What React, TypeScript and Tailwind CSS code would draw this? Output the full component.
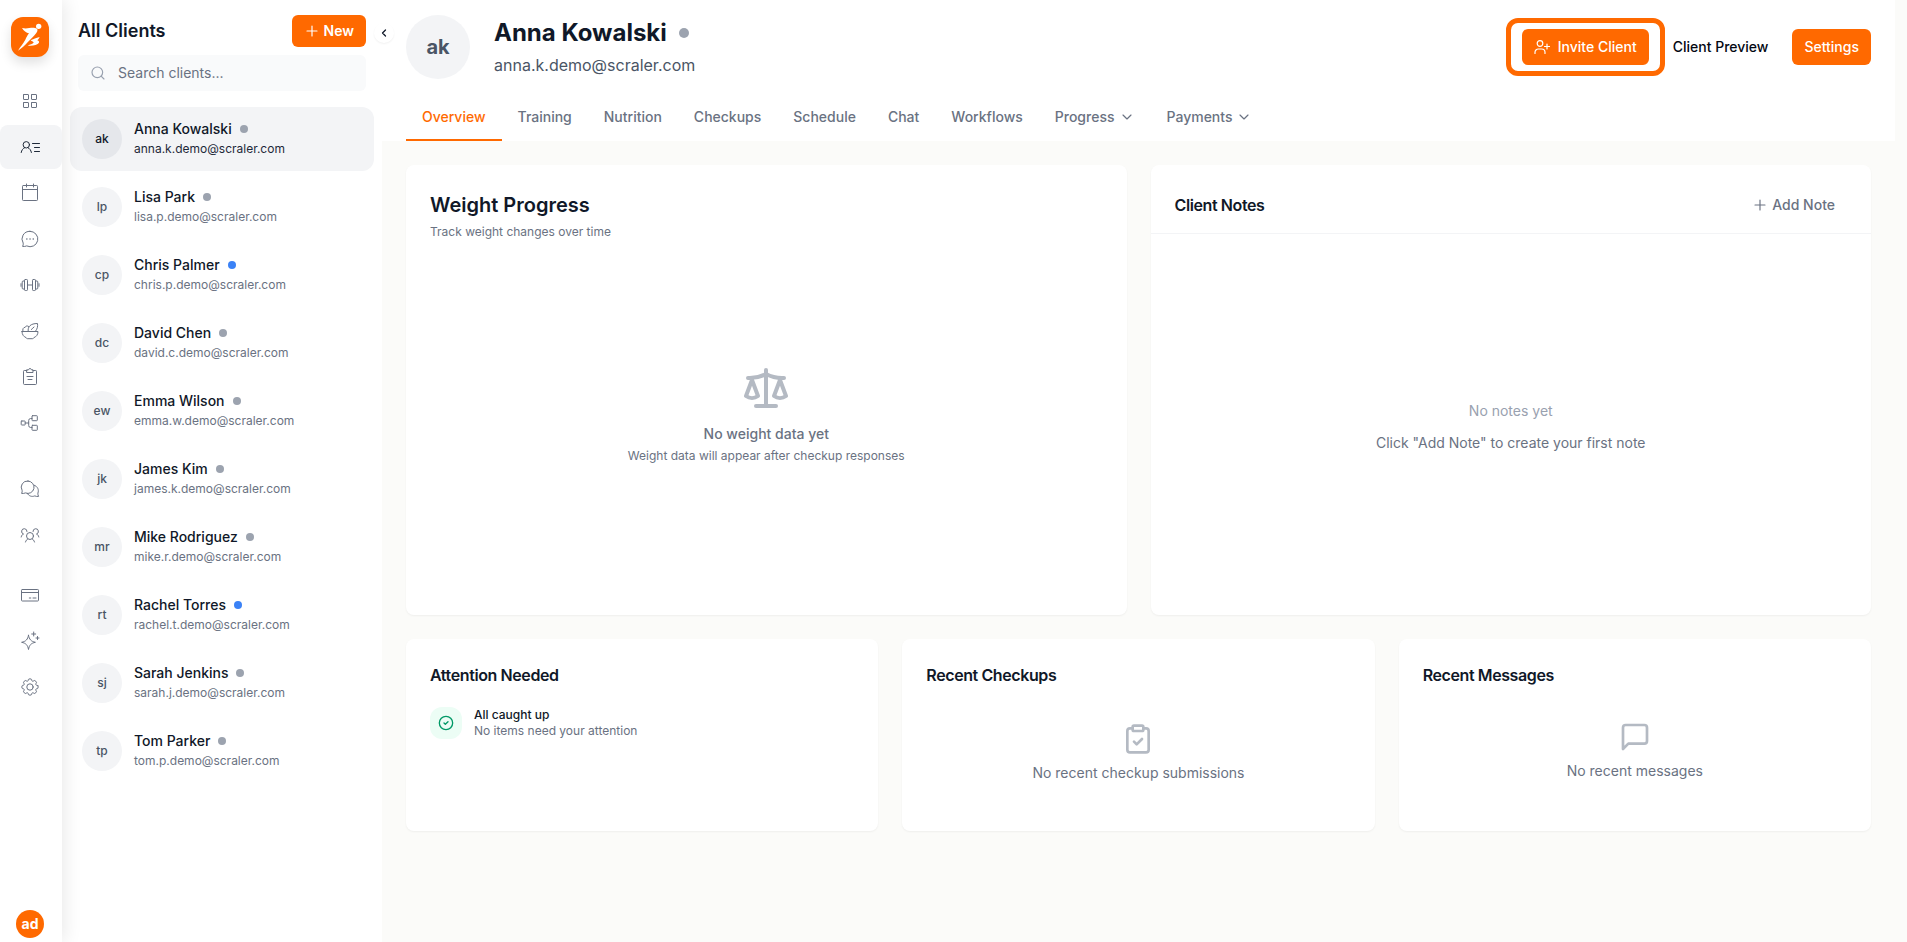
import type { ReactNode } from 'react';
import { ChevronDown, ChevronLeft, CircleCheck, ClipboardCheck, Scale, Search } from 'lucide-react';

interface Client {
  name: string;
  initials: string;
  email: string;
  active?: boolean;
}

const clients: Client[] = [
  { name: 'Anna Kowalski', initials: 'ak', email: 'anna.k.demo@scraler.com' },
  { name: 'Lisa Park', initials: 'lp', email: 'lisa.p.demo@scraler.com' },
  { name: 'Chris Palmer', initials: 'cp', email: 'chris.p.demo@scraler.com', active: true },
  { name: 'David Chen', initials: 'dc', email: 'david.c.demo@scraler.com' },
  { name: 'Emma Wilson', initials: 'ew', email: 'emma.w.demo@scraler.com' },
  { name: 'James Kim', initials: 'jk', email: 'james.k.demo@scraler.com' },
  { name: 'Mike Rodriguez', initials: 'mr', email: 'mike.r.demo@scraler.com' },
  { name: 'Rachel Torres', initials: 'rt', email: 'rachel.t.demo@scraler.com', active: true },
  { name: 'Sarah Jenkins', initials: 'sj', email: 'sarah.j.demo@scraler.com' },
  { name: 'Tom Parker', initials: 'tp', email: 'tom.p.demo@scraler.com' },
];

const tabs = [
  { label: 'Overview' },
  { label: 'Training' },
  { label: 'Nutrition' },
  { label: 'Checkups' },
  { label: 'Schedule' },
  { label: 'Chat' },
  { label: 'Workflows' },
  { label: 'Progress', menu: true },
  { label: 'Payments', menu: true },
];

// Rounded eight-lobed outline for the settings gear
function gearPath() {
  const at = (r: number, deg: number) => {
    const a = (deg * Math.PI) / 180;
    return `${(10 + r * Math.cos(a)).toFixed(2)} ${(10 + r * Math.sin(a)).toFixed(2)}`;
  };
  let d = `M${at(8, -9)}`;
  for (let i = 0; i < 8; i++) {
    const base = i * 45;
    d += `Q${at(8.4, base)} ${at(8, base + 9)}Q${at(7.6, base + 14)} ${at(6.7, base + 16)}Q${at(5.8, base + 22.5)} ${at(6.7, base + 29)}Q${at(7.6, base + 31)} ${at(8, base + 36)}`;
  }
  return `${d}Z`;
}

const icons: Record<string, ReactNode> = {
  dashboard: (
    <>
      <rect x="3.5" y="3.5" width="5" height="5" rx=".4" />
      <rect x="11.5" y="3.5" width="5" height="5" rx=".4" />
      <rect x="3.5" y="11.5" width="5" height="5" rx=".4" />
      <rect x="11.5" y="11.5" width="5" height="5" rx=".4" />
    </>
  ),
  clients: (
    <>
      <circle cx="6.3" cy="7.8" r="3.2" />
      <path d="M1.2 15.5c.4-2.3 1.7-4 3.4-4.8M8 10.700c1.700.8 3 2.500 3.400 4.800M12.500 6.500h7M14.500 10.500h5M14.500 14.500h5" />
    </>
  ),
  calendar: (
    <>
      <rect x="2.500" y="2.500" width="15" height="15" rx=".8" />
      <path d="M2.500 6.500h15M6.500 1v3M13.500 1v3" />
    </>
  ),
  messages: (
    <>
      <path d="M10 2.300a7.700 7.700 0 1 1-3.300 14.600c-1.300.6-2.700.7-4.100.5.600-1 .8-2.100.6-3.300A7.700 7.700 0 0 1 10 2.300Z" />
      <path d="M6.800 10h.1M10 10h.1M13.200 10h.1" strokeWidth="1.500" />
    </>
  ),
  training: (
    <>
      <rect x="4.500" y="4.500" width="3" height="11" rx=".8" />
      <rect x="12.500" y="4.500" width="3" height="11" rx=".8" />
      <path d="M7.500 10h5M4.500 6H3c-.5 0-.8.400-.8 1v6c0 .6.300 1 .8 1h1.500M15.500 6H17c.5 0 .8.400.8 1v6c0 .6-.3 1-.8 1h-1.500M1 8.700v2.600M19 8.700v2.600" />
    </>
  ),
  nutrition: (
    <>
      <path d="M2 10.500h16c0 3.200-1.700 5.200-4.200 6.200-.2.600-.7 1-1.300 1h-5c-.6 0-1.100-.4-1.300-1C3.700 15.700 2 13.700 2 10.500Z" />
      <path d="M3 10.500c-.8-2.300.3-4.200 2.200-4.200.4-1.300 2-1.900 3.400-.9M8.200 10.500C7.500 5.500 10.500 2.500 17.500 2.500c.4 3-.1 5.500-2.200 8M11.500 8.500c.7-1 1.500-1.800 2.500-2.500" />
    </>
  ),
  checkups: (
    <>
      <path d="M7 3.500H4.300a.8.800 0 0 0-.8.800v12.400c0 .4.400.8.800.8h11.400c.4 0 .8-.4.800-.8V4.300a.8.800 0 0 0-.8-.8H13" />
      <path d="M7 2.800h1.500c.3-.9.800-1.300 1.500-1.300s1.200.4 1.500 1.300H13v2.700H7ZM7 9.500h6M8 12.500h4" />
    </>
  ),
  workflows: (
    <>
      <rect x="1.200" y="8" width="4" height="4" rx=".6" />
      <rect x="12" y="2.700" width="5.300" height="5" rx=".6" />
      <rect x="12" y="12.300" width="5.300" height="5" rx=".6" />
      <path d="M5.200 10h3.500M12 5.500h-1.300a2 2 0 0 0-2 2v5a2 2 0 0 0 2 2H12" />
    </>
  ),
  forum: (
    <>
      <path d="M8 2a6.200 6.200 0 1 1-2.600 11.900c-1.200.6-2.400.7-3.800.5.600-1 .7-2 .5-3.100A6.200 6.200 0 0 1 8 2Z" />
      <path d="M14.200 6.200c3.400 1.200 5 4.600 3.700 7.900-.1 1.200.1 2.200.7 3.300-1.400.2-2.600.1-3.800-.5-3 1.200-5.900.2-7.500-2.500" />
    </>
  ),
  community: (
    <>
      <circle cx="10" cy="11" r="3.500" />
      <path d="M5.500 17c.4-1.500 1.200-2.500 2.300-3M14.500 17c-.4-1.500-1.200-2.500-2.300-3M7 6.500A2.700 2.700 0 1 0 3.500 9C2.300 9.500 1.500 10.500 1.200 12M13 6.500A2.700 2.700 0 1 1 16.500 9c1.200.5 2 1.500 2.300 3" />
    </>
  ),
  payments: (
    <>
      <rect x="1.500" y="4.500" width="17" height="11.500" rx=".8" />
      <path d="M1.500 7.500h17M9.300 13h1.500M13 13h3" />
    </>
  ),
  ai: (
    <>
      <path d="M8.500 4.300c.8 4.200 2.500 6.100 6.900 7-4.400.9-6.100 2.800-6.900 7.200-.8-4.400-2.500-6.300-6.900-7.200 4.400-.9 6.100-2.800 6.900-7Z" />
      <path d="M13.700 1v4M11.700 3h4M17.500 5.500v3M16 7h3" />
    </>
  ),
  settings: (
    <>
      <path d={gearPath()} />
      <circle cx="10" cy="10" r="3.200" />
    </>
  ),
};

const navGroups = [
  ['dashboard', 'clients', 'calendar', 'messages', 'training', 'nutrition', 'checkups', 'workflows'],
  ['forum', 'community'],
  ['payments', 'ai', 'settings'],
];

const groupSpacing = ['mt-[22px]', 'mt-[22px]', 'mt-4'];

export default function App() {
  return (
    <div className="flex min-h-screen bg-[#fbfbf9] font-['Inter',sans-serif] text-sm text-gray-900">
      <IconRail />
      <ClientList />
      <main className="min-w-0 flex-1 pr-3">
        <ClientHeader />
        <Overview />
      </main>
    </div>
  );
}

function IconRail() {
  return (
    <aside className="z-10 flex w-[62px] shrink-0 flex-col bg-white pt-[17px] pb-1 shadow-[4px_0_16px_rgba(0,0,0,0.08)]">
      <a
        href="#home"
        aria-label="Home"
        className="ml-[11px] flex h-10 w-[38px] items-center justify-center rounded-xl bg-orange-500 shadow-[0_6px_12px_rgba(0,0,0,0.12)]"
      >
        <svg viewBox="0 0 114 120" className="h-10 w-[38px]" fill="white" aria-hidden="true">
          <circle cx="83" cy="28" r="8" />
          <path d="M33 33C48 37 58 31 72 33C80 34 82 40 76 48C68 58 59 66 50 76C42 85 32 94 21 101C28 89 37 79 43 68C46 62 48 57 54 49C46 47 38 42 33 33Z" />
          <path d="M62 68C68 68 74 62 86 60C83 66 81 68 79 70C86 73 86 78 80 81C72 86 62 86 50 86C57 82 65 80 68 77C67 74 64 72 59 71Z" />
        </svg>
      </a>
      <nav>
        {navGroups.map((group, i) => (
          <div key={group[0]} className={`flex flex-col gap-0.5 ${groupSpacing[i]}`}>
            {group.map((id) => (
              <a
                key={id}
                href={`#${id}`}
                aria-label={id}
                className={`flex h-11 items-center justify-center rounded-lg pr-0.5 ${
                  id === 'clients' ? 'bg-gray-100 text-gray-800' : 'text-gray-500'
                }`}
              >
                <svg
                  viewBox="0 0 20 20"
                  className="size-5"
                  fill="none"
                  stroke="currentColor"
                  strokeWidth="1"
                  strokeLinecap="round"
                  strokeLinejoin="round"
                  aria-hidden="true"
                >
                  {icons[id]}
                </svg>
              </a>
            ))}
          </div>
        ))}
      </nav>
      <button
        type="button"
        className="mt-auto ml-4 size-7 rounded-full bg-orange-500 text-sm font-bold text-white"
      >
        ad
      </button>
    </aside>
  );
}

function ClientList() {
  return (
    <section className="relative w-80 shrink-0 bg-white pt-[15px]">
      <div className="flex items-center justify-between px-4">
        <h2 className="text-lg font-semibold">All Clients</h2>
        <button
          type="button"
          className="flex h-8 items-center gap-1 rounded-md bg-orange-500 px-3 text-sm font-semibold text-white"
        >
          <PlusIcon />
          New
        </button>
      </div>
      <label className="mx-4 mt-2 flex h-9 items-center gap-3 rounded-md bg-gray-50 px-3">
        <Search size={16} strokeWidth={1.75} className="text-gray-400" />
        <input
          type="search"
          aria-label="Search clients"
          placeholder="Search clients..."
          className="min-w-0 flex-1 bg-transparent text-sm outline-none placeholder:text-gray-500"
        />
      </label>
      <ul className="mt-4 flex flex-col gap-1 px-2">
        {clients.map((client, i) => (
          <li key={client.email}>
            <a
              href={`#${client.initials}`}
              className={`flex h-16 items-center gap-3 rounded-xl px-3 ${i === 0 ? 'bg-gray-100' : ''}`}
            >
              <span
                className={`flex size-10 shrink-0 items-center justify-center rounded-full text-xs font-medium ${
                  i === 0 ? 'bg-gray-200 text-gray-900' : 'bg-gray-100 text-gray-600'
                }`}
              >
                {client.initials}
              </span>
              <span className="min-w-0">
                <span className="flex items-center gap-2 text-sm font-medium">
                  {client.name}
                  <span className={`size-2 rounded-full ${client.active ? 'bg-[#3b82f6]' : 'bg-[#9ca3af]'}`} />
                </span>
                <span className={`block text-xs leading-5 ${i === 0 ? 'text-gray-800' : 'text-gray-500'}`}>
                  {client.email}
                </span>
              </span>
            </a>
          </li>
        ))}
      </ul>
      <button
        type="button"
        aria-label="Collapse client list"
        className="absolute top-[23px] -right-3 flex size-5 items-center justify-center rounded-full bg-white text-gray-900 shadow-[0_1px_2px_rgba(0,0,0,0.06)]"
      >
        <ChevronLeft size={12} strokeWidth={2.5} />
      </button>
    </section>
  );
}

function ClientHeader() {
  return (
    <header className="bg-white px-6 pt-[15px]">
      <div className="flex items-center justify-between">
        <div className="flex items-center gap-6">
          <div className="flex size-16 items-center justify-center rounded-full bg-gray-100 text-xl font-bold text-gray-600">
            ak
          </div>
          <div>
            <h1 className="flex items-center gap-3 text-2xl font-bold">
              Anna Kowalski
              <span className="size-2.5 rounded-full bg-[#9ca3af]" />
            </h1>
            <p className="mt-1 text-base text-gray-600">anna.k.demo@scraler.com</p>
          </div>
        </div>
        <div className="flex items-center gap-3">
          <div className="relative">
            <button
              type="button"
              className="flex h-9 items-center gap-2 rounded-md bg-orange-500 px-3 text-sm font-medium text-white"
            >
              <svg
                viewBox="0 0 16 16"
                className="size-4"
                fill="none"
                stroke="currentColor"
                strokeWidth="1.2"
                strokeLinecap="round"
                aria-hidden="true"
              >
                <circle cx="6" cy="4.500" r="2.800" />
                <path d="M1 14.500v-1.200a3.300 3.300 0 0 1 3.300-3.300h3.400a3.300 3.300 0 0 1 3.300 3.300v1.200M13 5v5M10.500 7.500h5" />
              </svg>
              Invite Client
            </button>
            <span className="pointer-events-none absolute -inset-x-4 -inset-y-[11px] rounded-xl border-5 border-orange-500" />
          </div>
          <button type="button" className="h-9 px-3 text-sm font-medium text-gray-950">
            Client Preview
          </button>
          <button type="button" className="h-9 rounded-md bg-orange-500 px-3 text-sm font-medium text-white">
            Settings
          </button>
        </div>
      </div>
      <nav className="mt-[14px] flex">
        {tabs.map((tab, i) => (
          <a
            key={tab.label}
            href={`#${tab.label.toLowerCase()}`}
            className={`flex h-12 items-center gap-1 border-b-2 px-4 pt-0.5 text-sm font-medium ${
              i === 0 ? 'border-orange-500 text-orange-500' : 'border-transparent text-gray-500'
            }`}
          >
            {tab.label}
            {tab.menu ? <ChevronDown size={16} strokeWidth={1.75} /> : null}
          </a>
        ))}
      </nav>
    </header>
  );
}

function Overview() {
  return (
    <div className="p-6">
      <div className="grid grid-cols-2 gap-6">
        <Card className="flex min-h-[450px] flex-col p-6">
          <h2 className="text-xl leading-8 font-semibold">Weight Progress</h2>
          <p className="mt-[3px] text-xs text-gray-500">Track weight changes over time</p>
          <div className="flex flex-1 flex-col items-center pt-[124px]">
            <Scale size={48} className="text-[#9ca3af] opacity-75" />
            <p className="mt-3 text-sm font-medium text-gray-500">No weight data yet</p>
            <p className="mt-1 text-xs text-gray-500">Weight data will appear after checkup responses</p>
          </div>
        </Card>
        <Card className="flex flex-col">
          <div className="flex items-center justify-between border-b border-gray-100 px-6 pt-6 pb-3">
            <h2 className="text-base font-semibold tracking-tight">Client Notes</h2>
            <button type="button" className="flex h-8 items-center gap-1 px-3 text-sm font-medium text-gray-500">
              <PlusIcon />
              Add Note
            </button>
          </div>
          <div className="flex flex-1 flex-col items-center justify-center gap-3 pt-1 text-sm">
            <p className="text-gray-400">No notes yet</p>
            <p className="text-gray-500">Click "Add Note" to create your first note</p>
          </div>
        </Card>
      </div>

      <div className="mt-6 grid grid-cols-3 gap-6">
        <Card className="min-h-48 p-6">
          <h2 className="text-base font-semibold tracking-tight">Attention Needed</h2>
          <div className="mt-5 flex items-center gap-3">
            <span className="flex size-8 items-center justify-center rounded-xl bg-emerald-50 text-emerald-600">
              <CircleCheck size={16} strokeWidth={2} />
            </span>
            <div className="text-xs">
              <p className="font-medium">All caught up</p>
              <p className="text-gray-500">No items need your attention</p>
            </div>
          </div>
        </Card>
        <Card className="p-6">
          <h2 className="text-base font-semibold tracking-tight">Recent Checkups</h2>
          <div className="flex flex-col items-center gap-2 pt-9 text-sm text-gray-500">
            <ClipboardCheck size={32} className="text-[#9ca3af] opacity-75" />
            <p>No recent checkup submissions</p>
          </div>
        </Card>
        <Card className="p-6">
          <h2 className="text-base font-semibold tracking-tight">Recent Messages</h2>
          <div className="flex flex-col items-center gap-2 pt-[34px] text-sm text-gray-500">
            <svg
              viewBox="0 0 24 24"
              className="size-8 text-[#9ca3af] opacity-75"
              fill="none"
              stroke="currentColor"
              strokeWidth="2"
              strokeLinecap="round"
              strokeLinejoin="round"
              aria-hidden="true"
            >
              <path d="M21 15a2 2 0 0 1-2 2H7l-4 4V5a2 2 0 0 1 2-2h14a2 2 0 0 1 2 2z" />
            </svg>
            <p>No recent messages</p>
          </div>
        </Card>
      </div>
    </div>
  );
}

function PlusIcon() {
  return (
    <svg
      viewBox="0 0 24 24"
      className="size-4"
      fill="none"
      stroke="currentColor"
      strokeWidth="1.750"
      strokeLinecap="round"
      aria-hidden="true"
    >
      <path d="M12 4.500v15M4.500 12h15" />
    </svg>
  );
}

function Card({ className, children }: { className: string; children: ReactNode }) {
  return (
    <section className={`rounded-lg bg-white shadow-[0_1px_2px_rgba(0,0,0,0.05)] ${className}`}>{children}</section>
  );
}
